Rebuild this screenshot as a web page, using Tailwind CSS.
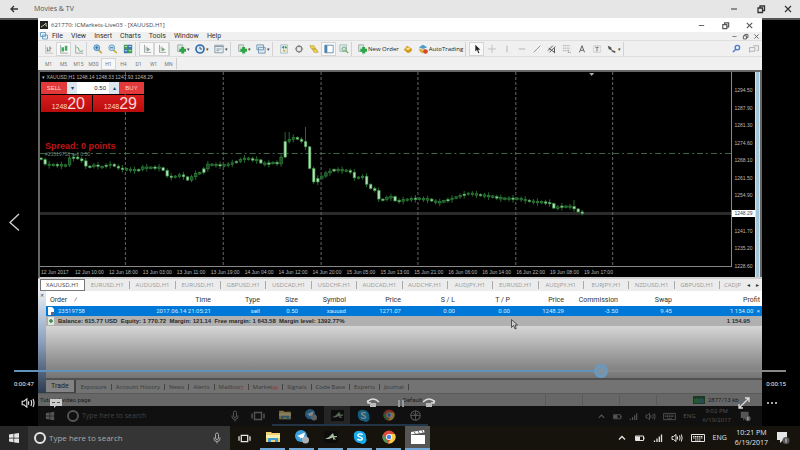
<!DOCTYPE html>
<html lang="en">

<head>
	<title>Movies &amp; TV</title>
	<meta charset="UTF-8">
	<meta name="viewport" content="width=device-width, initial-scale=1.0">
	<script src="https://cdn.jsdelivr.net/npm/@tailwindcss/browser@4"></script>
</head>

<body class="flex h-screen flex-col overflow-hidden bg-black font-['Roboto',sans-serif] text-[7px] leading-[10px] text-[#444]">

	<!-- shared icons -->
	<svg class="hidden">
		<symbol id="min" viewBox="0 0 10 10"><path d="M2 5h6" stroke="currentColor" /></symbol>
		<symbol id="restore" viewBox="0 0 10 10"><path d="M2 4h4.500v4.500H2zM4 4V2h4.500v4.500H6.500" fill="none" stroke="currentColor" stroke-width="1.300" /></symbol>
		<symbol id="close" viewBox="0 0 10 10"><path d="M2 2l6 6M8 2l-6 6" stroke="currentColor" stroke-width="1.200" /></symbol>
		<symbol id="win" viewBox="0 0 12 12"><path d="M1 2.500l4.500-.700v3.900H1zM6.200 1.700L11 1v4.700H6.200zM1 6.400h4.500v3.900L1 9.600zM6.200 6.400H11v4.700l-4.800-.700z" fill="currentColor" /></symbol>
		<symbol id="mic" viewBox="0 0 12 12"><path d="M4.500 2.500a1.500 1.500 0 0 1 3 0v3.500a1.500 1.500 0 0 1-3 0zM3 5.500v1a3 3 0 0 0 6 0v-1M6 9.500v2" fill="none" stroke="currentColor" /></symbol>
		<symbol id="ring" viewBox="0 0 14 14"><circle cx="7" cy="7" r="5" fill="none" stroke="currentColor" stroke-width="2" /></symbol>
		<symbol id="taskview" viewBox="0 0 14 12"><path d="M3.500 2.500h7v7h-7zM1 3.500v5M13 3.500v5" fill="none" stroke="currentColor" stroke-width="1.400" /></symbol>
		<symbol id="folder" viewBox="0 0 14 12"><path d="M0 1h5l1 1h8v9H0z" fill="#f0d070" /><path d="M0 4h14v3H0z" fill="#fdf0b0" /><path d="M2 7h10v4H9V9H5v2H2z" fill="#3fa0d0" /></symbol>
		<symbol id="telegram" viewBox="0 0 14 14"><circle cx="6" cy="6" r="6" fill="#3a9fdc" /><path d="M2 6l8-3.500L8.500 9 6 7.500 5 9 4.500 6.800z" fill="#fff" /><circle cx="10.500" cy="10" r="3.500" fill="#a9b2b8" /></symbol>
		<symbol id="trader" viewBox="0 0 14 14"><path d="M0 1h14v12H0z" fill="#0c0c0c" /><path d="M1 9l4-2 4-4 1 3h3v1l-3 .5 2 2H9V7.500L5 9z" fill="#a5bd98" /></symbol>
		<symbol id="skype" viewBox="0 0 14 14"><path d="M4 1a6 6 0 0 1 3 0 6 6 0 0 1 6 7 4 4 0 0 1-6 5 6 6 0 0 1-6-7 4 4 0 0 1 3-5z" fill="#18a9e8" /><path d="M9.500 4.800C8.500 3.500 5 3.500 4.800 5.200 4.700 7 9.500 6.600 9.400 8.700 9.200 10.500 5.500 10.500 4.500 9" fill="none" stroke="#fff" stroke-width="1.400" /></symbol>
		<symbol id="chrome" viewBox="0 0 14 14"><circle cx="7" cy="7" r="6.500" fill="#e04a3a" /><path d="M1.200 4L6 13.400A6.500 6.500 0 0 1 1.200 4z" fill="#3ba557" /><path d="M7 4h5.800A6.500 6.500 0 0 1 6 13.400L9.500 8z" fill="#f7ce46" /><circle cx="7" cy="7" r="3" fill="#fff" /><circle cx="7" cy="7" r="2.200" fill="#4285e8" /></symbol>
		<symbol id="ball" viewBox="0 0 14 14"><circle cx="7" cy="7" r="5" fill="none" stroke="#999" stroke-width="1.300" /><path d="M7 2v10M2 7h10M4 4l3 3 3-3" fill="none" stroke="#999" /></symbol>
		<symbol id="clapper" viewBox="0 0 14 14"><path d="M0 5h14v9H0zM0 2l13-2 .5 2.500L0 4.500z" fill="#fff" /><path d="M3 1.500l1.500 2.500M7 .9l1.500 2.500M11 .3l1 2.500" stroke="#666" /></symbol>
		<symbol id="up" viewBox="0 0 10 10"><path d="M2 6.500l3-3 3 3" fill="none" stroke="currentColor" stroke-width="1.300" /></symbol>
		<symbol id="battery" viewBox="0 0 10 10"><path d="M.5 3h8v4.500h-8zM9 4.300v2" fill="none" stroke="currentColor" /><path d="M1 3.500h4v3.500H1z" fill="currentColor" /></symbol>
		<symbol id="wifi" viewBox="0 0 10 10"><path d="M1.500 9V7.500M4 9V5.500M6.300 9V3.500M8.500 9V1.500" stroke="currentColor" stroke-width="1.300" /></symbol>
		<symbol id="sound" viewBox="0 0 12 10"><path d="M1 3.500h1.500L5 1.500v7L2.500 6.500H1zM6.500 3.500v3M8.500 2.500q1.200 2.500 0 5M10.300 1.500q1.700 3.500 0 7" fill="none" stroke="currentColor" /></symbol>
		<symbol id="kbd" viewBox="0 0 14 10"><path d="M.5 1.500h13v7H.5z" fill="none" stroke="currentColor" /><path d="M2 3.500h10M2 5h10M4 7h6" fill="none" stroke="currentColor" stroke-dasharray="1.500 .5" /></symbol>
		<symbol id="note" viewBox="0 0 14 14"><path d="M1 1h10v8H7l-3 3V9H1z" fill="currentColor" /><circle cx="10" cy="9.500" r="3.500" fill="#555" /><path d="M10 7.500v4" stroke="#ddd" /></symbol>

		<symbol id="bars" viewBox="0 0 12 12"><path d="M2 1v10h9" fill="none" stroke="#bbb" /><path d="M4 4v5M4 8h2M7 3v6M7 5h2" stroke="#6a7a6a" /></symbol>
		<symbol id="candles" viewBox="0 0 12 12"><path d="M2 1v10h9" fill="none" stroke="#999" /><path d="M3 4h3v5H3zM7 2h3v6H7z" fill="#3dae5c" /></symbol>
		<symbol id="linechart" viewBox="0 0 12 12"><path d="M2 1v10h9" fill="none" stroke="#999" /><path d="M3 4q3 0 3 3t5 1" fill="none" stroke="#5b9b6b" /></symbol>
		<symbol id="zoomin" viewBox="0 0 12 12"><path d="M6.500 7l4 4" stroke="#c7a640" stroke-width="2" /><circle cx="4.500" cy="4.500" r="3.500" fill="#a8d1ee" stroke="#3c80b8" /><path d="M2.500 4.500h4M4.500 2.500v4" stroke="#1d5c98" /></symbol>
		<symbol id="zoomout" viewBox="0 0 12 12"><path d="M6.500 7l4 4" stroke="#c7b640" stroke-width="2" /><circle cx="4.500" cy="4.500" r="3.500" fill="#c0e0ee" stroke="#5a98b8" /><path d="M2.500 4.500h4" stroke="#1d5c98" /></symbol>
		<symbol id="tile" viewBox="0 0 12 12"><path d="M1 1h5v5H1zM6 6h5v5H6z" fill="#3f9b56" /><path d="M6 1h5v5H6zM1 6h5v5H1z" fill="#3a77b5" /><path d="M2 3h3M7 3h3M2 8h3M7 8h3" stroke="#d8ebd8" /></symbol>
		<symbol id="scroll" viewBox="0 0 12 12"><path d="M3 1v9h8M5 3v5" fill="none" stroke="#999" /><path d="M6 4l4 2.500L6 9z" fill="#7aa98a" /></symbol>
		<symbol id="plus" viewBox="0 0 12 12"><path d="M2 1h6v8H2z" fill="#d8e4d8" stroke="#9aa" /><path d="M4 7.500h8M8 3.500v8" stroke="#2ba548" stroke-width="3.500" /></symbol>
		<symbol id="clock" viewBox="0 0 12 12"><circle cx="6" cy="6" r="4.800" fill="#dcebf7" stroke="#2e6da8" stroke-width="2" /><path d="M6 3v3h2.500" fill="none" stroke="#245" /></symbol>
		<symbol id="template" viewBox="0 0 12 12"><path d="M1 1.500h10v9H1z" fill="#e6eef2" stroke="#7d929c" /><path d="M1 3h10M3 6h6M3 8h3" stroke="#7d929c" /></symbol>
		<symbol id="windows" viewBox="0 0 12 12"><path d="M1 1h8v6H1zM3 4h8v7H3z" fill="#dcebf3" stroke="#6b8fac" /></symbol>
		<symbol id="market" viewBox="0 0 12 12"><path d="M2 1h8v10H2z" fill="#e9f2e6" stroke="#a3b8c2" /><path d="M3 4l3-2v4z" fill="#3a84c0" /><path d="M5 6l4 3H5z" fill="#d6a52c" /><path d="M7 3l2 2" stroke="#3a9b50" stroke-width="2" /></symbol>
		<symbol id="target" viewBox="0 0 12 12"><circle cx="6" cy="6" r="3.500" fill="#eee" stroke="#777" stroke-width="1.300" /><path d="M6 1v3M6 8v3M1 6h3M8 6h3" stroke="#888" /></symbol>
		<symbol id="tags" viewBox="0 0 12 12"><path d="M1 2h5l2 4H3zM4 6h5l2 4H6z" fill="#f0cf4c" stroke="#b8962c" stroke-width=".7" /></symbol>
		<symbol id="panel" viewBox="0 0 12 12"><path d="M1 1.500h10v9H1z" fill="#fff" stroke="#5b88aa" /><path d="M1 1.500h3v9H1z" fill="#4b83b0" /></symbol>
		<symbol id="tester" viewBox="0 0 12 12"><path d="M1 1h8v8H1z" fill="#e4ece8" stroke="#9bb" /><circle cx="6" cy="6" r="2.500" fill="#cfe6d4" stroke="#6a9b7a" /><path d="M8 8l3 3" stroke="#69a84f" stroke-width="1.500" /></symbol>
		<symbol id="gold" viewBox="0 0 12 12"><path d="M1 7l4-5 6 4-1 3-4 2z" fill="#cf9a22" /><path d="M3 6l3-2 3 1.500-3 2z" fill="#f9e38a" /></symbol>
		<symbol id="auto" viewBox="0 0 12 12"><path d="M1 4l5-3 5 3-5 2z" fill="#4b9bc8" /><path d="M1 5l5 2 3-1v3l-4 2-3-2z" fill="#dfae40" /><circle cx="9" cy="9" r="2.800" fill="#d4452c" /></symbol>
		<symbol id="arrow" viewBox="0 0 12 12"><path d="M4 1v8l2-2 1.500 4 1.300-.6L7.300 7H10z" fill="#222" /></symbol>
		<symbol id="cross" viewBox="0 0 12 12"><path d="M6 1v10M1 6h10" stroke="#bbb" /></symbol>
		<symbol id="vline" viewBox="0 0 12 12"><path d="M6 2v8" stroke="#aaa" /></symbol>
		<symbol id="hline" viewBox="0 0 12 12"><path d="M2 6h8" stroke="#aaa" /></symbol>
		<symbol id="trend" viewBox="0 0 12 12"><path d="M2 10l8-8" stroke="#888" /></symbol>
		<symbol id="channel" viewBox="0 0 12 12"><path d="M1 8l6-6M3 10l7-7M2 5l7 5M9 5v6" stroke="#555" stroke-width="1.200" /></symbol>
		<symbol id="fibo" viewBox="0 0 12 12"><path d="M1 2h9M1 5h9M1 8h7M8 7v4M7 10h4" stroke="#999" stroke-dasharray="1.500 .7" /></symbol>
		<symbol id="textA" viewBox="0 0 12 12"><path d="M3 10l3-8 3 8M4 7.500h4" fill="none" stroke="#666" stroke-width="1.200" /></symbol>
		<symbol id="label" viewBox="0 0 12 12"><path d="M2 2h8v8H2z" fill="none" stroke="#aaa" stroke-dasharray="1 1" /><path d="M4 4h4M6 4v5" stroke="#666" /></symbol>
		<symbol id="shapes" viewBox="0 0 12 12"><path d="M1 2l4 2 1 4-4-2z" fill="#555" /><path d="M6 8l4 2" stroke="#555" stroke-width="2" /></symbol>
	</svg>

	<header class="flex h-[18px] shrink-0 items-center bg-[#e6e6e6] pr-[7px] text-[#555]">
		<button aria-label="Back" class="ml-2 mr-[14px] h-[10px] w-[12px]">
			<svg viewBox="0 0 12 10" class="h-full w-full"><path d="M10 5H3M6 2L3 5l3 3" fill="none" stroke="#333" stroke-width="1.300" /></svg>
		</button>
		<h1 class="flex-1 font-['Open_Sans',sans-serif]">Movies &amp; TV</h1>
		<div class="flex gap-[17px] text-[#333]">
			<button aria-label="Minimize"><svg class="size-[10px]"><use href="#min" /></svg></button>
			<button aria-label="Restore"><svg class="size-[10px]"><use href="#restore" /></svg></button>
			<button aria-label="Close"><svg class="size-[10px]"><use href="#close" /></svg></button>
		</div>
	</header>

	<main class="relative flex min-h-0 flex-1">
		<div class="w-[38px] shrink-0 border-t-2 border-[#555]"></div>

		<!-- the video frame -->
		<div class="flex min-w-0 flex-1 flex-col bg-[#f0f0f0]">
			<div class="flex h-[14px] items-center bg-white pl-[2px] pr-[8px] text-[6px]">
				<svg viewBox="0 0 8 8" class="mr-[3px] size-[8px]"><path d="M0 0h8v8H0z" fill="#222" /><path d="M1 6l3-2 2-2v3h1" fill="none" stroke="#b5c5a8" /></svg>
				<span class="flex-1 font-['Open_Sans',sans-serif]">621770: ICMarkets-Live03 - [XAUUSD,H1]</span>
				<div class="flex gap-[15px] text-[#555]">
					<svg class="size-[9px]"><use href="#min" /></svg>
					<svg class="size-[9px]"><use href="#restore" /></svg>
					<svg class="size-[9px]"><use href="#close" /></svg>
				</div>
			</div>
			<nav class="flex h-[8px] items-center gap-[8px] pl-[2px] pr-[2px] text-[#333]">
				<svg viewBox="0 0 8 8" class="-mr-[4px] size-[8px]"><path d="M.5 .5h5v4h-5zM2.500 3h5v4h-5z" fill="#e8f3fb" stroke="#6fa3c8" /></svg>
				<a href="#">File</a><a href="#">View</a><a href="#">Insert</a><a href="#">Charts</a><a href="#">Tools</a><a href="#">Window</a><a href="#">Help</a>
				<div class="ml-auto flex gap-[4px] text-[#555]">
					<svg class="size-[7px]"><use href="#min" /></svg>
					<svg class="size-[7px]"><use href="#restore" /></svg>
					<svg class="size-[7px]"><use href="#close" /></svg>
				</div>
			</nav>
			<div class="flex h-[17px] items-center border-y border-[#dedede] pl-[3px] pr-[2px]" id="toolbar"></div>
			<div class="flex h-[13px] items-center pl-[3px] text-[5px] text-[#777]" id="periods"></div>

			<!-- chart window -->
			<div class="flex min-h-0 flex-1 border-b-2 border-l-2 border-t-2 border-[#666] border-b-[#d0d0d0] bg-black font-['Liberation_Sans',sans-serif] text-[#bbb]">
				<div class="relative flex min-w-0 flex-1 flex-col">
					<svg class="min-h-0 w-full flex-1 border-b border-r border-[#888]" viewBox="40 72 692 194" preserveAspectRatio="none" id="chart"></svg>
					<div class="flex h-[10px] items-center pr-[115px] text-[5px]" id="dates"></div>
					<p class="absolute left-[2px] top-0 whitespace-nowrap text-[5px]">&#9662; XAUUSD,H1 1248.14 1248.33 1247.93 1248.29</p>
					<p class="absolute left-[5px] top-[79px] whitespace-nowrap text-[5px] leading-[6px] text-[#688878]">#23519758 sell 0.50</p>
					<p class="absolute left-[5px] top-[70px] whitespace-nowrap text-[9px] leading-[9px] font-bold text-[#c01414]">Spread: 0 points</p>
					<div class="absolute left-[1px] top-[10px] grid w-[103px] grid-cols-2 gap-px text-[#ffd5d5]">
						<div class="col-span-2 flex h-[12px] text-[6px]">
							<button class="w-[26px] bg-[#e23a3a]">SELL</button>
							<button aria-label="Less volume" class="w-[10px] bg-[#dce6ee] text-[#246]">&#9662;</button>
							<input aria-label="Volume" value="0.50" class="w-0 flex-1 bg-white pr-[3px] text-right text-[#222]">
							<button aria-label="More volume" class="w-[10px] bg-[#dce6ee] text-[#246]">&#9652;</button>
							<button class="w-[25px] bg-[#e23a3a]">BUY</button>
						</div>
						<button class="flex h-[17px] items-end justify-end bg-linear-to-b from-[#d81c1c] to-[#b80c0c] pr-[7px] text-[7px]">1248<span class="text-[16px] leading-[17px]">20</span></button>
						<button class="flex h-[17px] items-end justify-end bg-linear-to-b from-[#d81c1c] to-[#b80c0c] pr-[7px] text-[7px]">1248<span class="text-[16px] leading-[17px]">29</span></button>
					</div>
				</div>
				<div class="flex w-[23px] flex-col justify-around pb-[2px] pt-[10px] text-[5px] leading-[7px]" id="prices"></div>
				<div class="w-[5px] border-x border-[#d5e5ee] bg-[#a2c6d8]"></div>
				<div class="w-[2px] bg-[#666]"></div>
			</div>

			<nav class="flex h-[12px] items-center overflow-hidden bg-[#ececec] pl-[2px] font-['Open_Sans',sans-serif] text-[6px] text-[#999]" id="charts"></nav>

			<!-- terminal -->
			<section class="flex h-[102px] shrink-0">
				<div class="w-[8px] bg-linear-to-b from-[#e8eef5] via-[#8ba0bd] to-[#2e3c50] text-center text-[5px] leading-[8px]">&#10005;</div>
				<div class="flex min-w-0 flex-1 flex-col bg-white">
					<table class="mt-[2px] w-full table-fixed text-right whitespace-nowrap [&_td]:p-0 [&_td]:pr-[2px] [&_th]:p-0 [&_th]:pr-[2px]">
						<thead class="bg-white text-[#333]">
							<tr class="h-[13px] [&_th]:font-normal">
								<th class="w-[60px] text-left"><span class="pl-[4px]">Order&nbsp; &nbsp; &#8260;</span></th>
								<th class="w-[107px]">Time</th>
								<th class="w-[49px]">Type</th>
								<th class="w-[38px]">Size</th>
								<th class="w-[48px]">Symbol</th>
								<th class="w-[55px]">Price</th>
								<th class="w-[54px]">S / L</th>
								<th class="w-[55px]">T / P</th>
								<th class="w-[54px]">Price</th>
								<th class="w-[54px]">Commission</th>
								<th class="w-[54px]">Swap</th>
								<th>Profit</th>
							</tr>
						</thead>
						<tbody>
							<tr class="h-[10px] bg-[#0078d7] text-[6px] text-[#d5ebff]">
								<td class="text-left"><span class="flex items-center gap-[4px] pl-[2px]"><svg viewBox="0 0 6 8" class="h-[8px] w-[6px]"><path d="M0 0h4l2 2v6H0z" fill="#fff" /><path d="M3 5h3v3H3z" fill="#667" /></svg>23519758</span></td>
								<td>2017.06.14 21:05:21</td>
								<td>sell</td>
								<td>0.50</td>
								<td>xauusd</td>
								<td>1271.07</td>
								<td>0.00</td>
								<td>0.00</td>
								<td>1248.29</td>
								<td>-3.50</td>
								<td>9.45</td>
								<td>1 154.00 <button aria-label="Close order" class="ml-[2px]">&times;</button></td>
							</tr>
							<tr class="h-[10px] bg-[#b0b0b0] font-['Liberation_Sans',sans-serif] text-[6px] text-[#2a2a2a]">
								<td colspan="10" class="text-left"><span class="flex items-center gap-[4px] pl-[2px] font-bold"><svg viewBox="0 0 6 8" class="h-[8px] w-[6px]"><path d="M0 0h6v8H0z" fill="#dfe8dc" /><path d="M1 4h4M3 2v4" stroke="#3a8a48" stroke-width="1.500" /></svg>Balance: 615.77 USD&nbsp; Equity: 1 770.72&nbsp; Margin: 121.14&nbsp; Free margin: 1 643.58&nbsp; Margin level: 1392.77%</span></td>
								<td colspan="2"><span class="pr-[10px] font-bold">1 154.95</span></td>
							</tr>
						</tbody>
					</table>
					<div class="flex-1 bg-linear-to-b from-[#d6d6d6] to-[#747474]"></div>
					<nav class="flex h-[15px] items-center border-t-2 border-[#505050] bg-[#737373] text-[#3a3a3a]">
						<a href="#" class="flex h-full items-center border-b border-r-2 border-[#444] bg-[#838383] px-[5px] text-[#222]">Trade</a>
						<div class="flex items-center gap-[4px] pl-[5px] font-['Open_Sans',sans-serif] text-[6px]" id="tabs"></div>
					</nav>
				</div>
			</section>
			<div class="flex h-[13px] shrink-0 items-center border-t border-[#5a5a5a] bg-[#676767] pl-[2px] text-[6px] text-[#1c1c1c]">
				<span class="w-[363px]">Tutorial video page</span>
				<span class="w-[142px]">Default</span>
				<span class="w-[37px] border-l border-[#5a5a5a]">&nbsp;</span>
				<span class="w-[37px] border-l border-[#5a5a5a]">&nbsp;</span>
				<span class="w-[37px] border-l border-[#5a5a5a]">&nbsp;</span>
				<span class="flex flex-1 items-center gap-[3px] border-l border-[#5a5a5a] pl-[36px]"><svg viewBox="0 0 12 8" class="h-[8px] w-[12px]"><path d="M0 0h12v8H0z" fill="#1d3a24" /><path d="M2 7V3M4 7V2M6 7V3" stroke="#2e7440" /><path d="M8 7V2M10 7V3" stroke="#365a86" /></svg>2877/13 kb</span>
			</div>
			<div class="flex h-[20px] shrink-0 items-center bg-[#101010] font-['Open_Sans',sans-serif] text-[#555]">
				<svg class="ml-[7px] size-[10px]"><use href="#win" /></svg>
				<svg class="ml-[11px] size-[14px]"><use href="#ring" /></svg>
				<span class="ml-[2px] w-[147px] text-[#444]">Type here to search</span>
				<svg class="size-[12px]"><use href="#mic" /></svg>
				<svg class="ml-[10px] h-[12px] w-[14px]"><use href="#taskview" /></svg>
				<div class="ml-[7px] flex h-full opacity-50">
					<span class="flex w-[26px] items-center justify-center border-b-2 border-[#345a80]"><svg class="h-[10px] w-[12px]"><use href="#folder" /></svg></span>
					<span class="flex w-[26px] items-center justify-center border-b-2 border-[#345a80]"><svg class="size-[12px]"><use href="#telegram" /></svg></span>
					<span class="flex w-[26px] items-center justify-center border-b-2 border-[#345a80] bg-[#3a3a3a]"><svg class="size-[13px]"><use href="#trader" /></svg></span>
					<span class="flex w-[26px] items-center justify-center border-b-2 border-[#345a80]"><svg class="size-[13px]"><use href="#skype" /></svg></span>
					<span class="flex w-[26px] items-center justify-center border-b-2 border-[#345a80]"><svg class="size-[12px]"><use href="#chrome" /></svg></span>
					<span class="flex w-[26px] items-center justify-center border-b-2 border-[#345a80]"><svg class="size-[13px]"><use href="#ball" /></svg></span>
				</div>
				<div class="ml-auto flex items-center gap-[7px] pr-[11px]">
					<svg class="size-[9px]"><use href="#up" /></svg>
					<svg class="size-[9px]"><use href="#battery" /></svg>
					<svg class="size-[9px]"><use href="#wifi" /></svg>
					<svg class="h-[9px] w-[11px]"><use href="#sound" /></svg>
					<svg class="h-[9px] w-[13px]"><use href="#kbd" /></svg>
					<span class="text-[6px]">ENG</span>
					<span class="text-center text-[6px] leading-[9px]">9:02 PM<br>6/19/2017</span>
					<svg class="ml-[2px] size-[11px]"><use href="#note" /></svg>
				</div>
			</div>
		</div>

		<div class="w-[38px] shrink-0 border-t-2 border-[#555]"></div>

		<!-- mouse pointer inside the video -->
		<svg viewBox="0 0 7 11" class="absolute left-[511px] top-[301px] h-[11px] w-[7px]"><path d="M.5 .5v8l2-2 1.500 3.500 1.300-.5L4 6h2.500z" fill="#ccc" stroke="#333" stroke-width=".8" /></svg>

		<!-- player controls -->
		<button aria-label="Previous" class="absolute left-[7px] top-[194px] h-[20px] w-[14px]">
			<svg viewBox="0 0 14 20" class="h-full w-full"><path d="M12 2L3 10.500l9 8" fill="none" stroke="#ccc" stroke-width="1.400" /></svg>
		</button>
		<div class="absolute inset-x-0 bottom-[16px] px-[14px] text-[#eee]">
			<input type="range" aria-label="Seek" min="0" max="1000" value="765" class="block h-[14px] w-full appearance-none bg-[linear-gradient(to_right,#6092bc_75%,#888_75%)] bg-[length:100%_2px] bg-center bg-no-repeat [&::-webkit-slider-thumb]:size-[14px] [&::-webkit-slider-thumb]:appearance-none [&::-webkit-slider-thumb]:rounded-full [&::-webkit-slider-thumb]:border-3 [&::-webkit-slider-thumb]:border-[#6a99c0] [&::-webkit-slider-thumb]:bg-[#7f92a2]">
			<div class="flex justify-between pt-px text-[6px]"><span>0:00:47</span><span>0:00:15</span></div>
			<div class="mt-[7px] flex h-[14px] items-center pl-[7px] text-[#ddd]">
				<button aria-label="Volume" class="w-[14px]"><svg class="h-[12px] w-[14px]"><use href="#sound" /></svg></button>
				<button aria-label="Subtitles" class="ml-[14px] w-[14px]"><svg viewBox="0 0 14 10" class="h-[10px] w-[14px]"><path d="M1 1h12v7H7l-2 2V8H1z" fill="#ccc" /><path d="M3 4.500h3M8 4.500h3" stroke="#555" /></svg></button>
				<div class="flex flex-1 justify-center gap-[16px]">
					<button aria-label="Skip back"><svg viewBox="0 0 14 12" class="h-[12px] w-[14px]"><path d="M1 5q6-6 12 0M2 3v3h3" fill="none" stroke="#ddd" stroke-width="1.500" /><path d="M4 6h6v4H4z" fill="#bbb" /></svg></button>
					<button aria-label="Pause"><svg viewBox="0 0 10 12" class="h-[12px] w-[10px]"><path d="M2 3h2v7H2zM6 3h2v7H6z" fill="#999" /></svg></button>
					<button aria-label="Skip forward"><svg viewBox="0 0 14 12" class="h-[12px] w-[14px]"><path d="M1 5q6-6 12 0M12 3v3H9" fill="none" stroke="#ddd" stroke-width="1.500" /><path d="M4 6h6v4H4z" fill="#bbb" /></svg></button>
				</div>
				<button aria-label="Full screen" class="mr-[16px]"><svg viewBox="0 0 12 12" class="size-[12px]"><path d="M7 1h4v4M11 1L1 11M1 7v4h4" fill="none" stroke="#ddd" stroke-width="1.300" /></svg></button>
				<button aria-label="More" class="mr-[8px]"><svg viewBox="0 0 12 4" class="h-[4px] w-[12px]"><path d="M1 2h2M5 2h2M9 2h2" stroke="#ddd" stroke-width="1.300" /></svg></button>
			</div>
		</div>
	</main>

	<footer class="flex h-[24px] shrink-0 items-center bg-[#15130b] font-['Open_Sans',sans-serif] text-[#e5e5e5]">
		<button aria-label="Start" class="flex h-full w-[28px] items-center justify-center bg-[#262626]"><svg class="size-[12px]"><use href="#win" /></svg></button>
		<label class="flex h-full w-[202px] items-center bg-[#353535] pl-[5px] pr-[7px]">
			<svg class="size-[14px] shrink-0"><use href="#ring" /></svg>
			<input aria-label="Search" placeholder="Type here to search" class="ml-[2px] w-0 flex-1 text-[8px] placeholder:text-[#aaa]">
			<svg class="size-[12px] text-[#aaa]"><use href="#mic" /></svg>
		</label>
		<button aria-label="Task view" class="flex h-full w-[28px] items-center justify-center"><svg class="h-[11px] w-[13px]"><use href="#taskview" /></svg></button>
		<div class="flex h-full gap-[4px] pl-[2px] [&>button]:flex [&>button]:w-[25px] [&>button]:items-center [&>button]:justify-center [&>button]:border-b-2 [&>button]:border-[#6fa8d8]">
			<button aria-label="File Explorer"><svg class="h-[12px] w-[14px]"><use href="#folder" /></svg></button>
			<button aria-label="Telegram"><svg class="size-[14px]"><use href="#telegram" /></svg></button>
			<button aria-label="MetaTrader"><svg class="size-[14px]"><use href="#trader" /></svg></button>
			<button aria-label="Skype"><svg class="size-[14px]"><use href="#skype" /></svg></button>
			<button aria-label="Chrome"><svg class="size-[14px]"><use href="#chrome" /></svg></button>
			<button aria-label="Movies and TV" class="bg-[#555]"><svg class="size-[14px]"><use href="#clapper" /></svg></button>
		</div>
		<div class="ml-auto flex items-center gap-[8px] pr-[10px]">
			<svg class="size-[10px]"><use href="#up" /></svg>
			<svg class="size-[10px]"><use href="#battery" /></svg>
			<svg class="size-[10px]"><use href="#wifi" /></svg>
			<svg class="h-[10px] w-[12px]"><use href="#sound" /></svg>
			<svg class="h-[10px] w-[14px]"><use href="#kbd" /></svg>
			<span>ENG</span>
			<time class="text-center">10:21 PM<br>6/19/2017</time>
			<button aria-label="Notifications"><svg class="size-[14px]"><use href="#note" /></svg></button>
		</div>
	</footer>

	<script>
		// toolbar: groups of [icon, kind or text]
		const groups = [
			[["bars"], ["candles", "on"], ["linechart"]],
			[["zoomin"], ["zoomout"], ["tile"]],
			[["scroll", "on"], ["scroll", "on"]],
			[["plus", "menu"], ["clock", "menu"], ["template", "menu"]],
			[["plus", "menu"], ["windows", "menu"]],
			[["market"], ["target"], ["tags"], ["panel", "on"], ["tester"]],
			[["plus", "New Order"], ["gold"], ["auto", "AutoTrading"]],
			[["arrow", "on"], ["cross"], ["vline"], ["hline"], ["trend"], ["channel"], ["fibo"], ["textA"], ["label"], ["shapes", "menu"]],
		];
		let bar = "";
		for (let group of groups) {
			bar += `<div class="mr-[3px] flex h-[14px] shrink-0 border-r border-[#d2d2d2]">`;
			for (let [icon, kind] of group) {
				const svg = `<svg class="size-[10px] shrink-0"><use href="#${icon}" /></svg>`;
				if (kind == "menu") {
					bar += `<button aria-label="${icon}" class="flex w-[19px] items-center justify-center gap-[1px] text-[5px]">${svg}&#9662;</button>`;
				} else if (kind == "on") {
					bar += `<button aria-label="${icon}" class="flex w-[15px] items-center justify-center border border-[#d5d5d5] bg-[#f8f8f8]">${svg}</button>`;
				} else if (kind) {
					bar += `<button class="flex items-center gap-px pl-[2px] pr-[2px] font-['Open_Sans',sans-serif] text-[6px] whitespace-nowrap text-[#222]">${svg}${kind}</button>`;
				} else {
					bar += `<button aria-label="${icon}" class="flex w-[15px] items-center justify-center">${svg}</button>`;
				}
			}
			bar += `</div>`;
		}
		bar += `<div class="ml-auto flex gap-[7px]">
			<svg viewBox="0 0 10 10" class="size-[9px]"><circle cx="6" cy="4" r="2.500" fill="none" stroke="#4a78c8" stroke-width="1.500" /><path d="M4 6L1 9" stroke="#4a78c8" stroke-width="1.500" /></svg>
			<svg viewBox="0 0 12 10" class="h-[9px] w-[12px]"><path d="M1 4h6v4H3L1 9zM5 2h6v5H9" fill="none" stroke="#aaa" /></svg>
		</div>`;
		document.getElementById("toolbar").innerHTML = bar;

		let periods = "";
		for (let p of ["M1", "M5", "M15", "M30", "H1", "H4", "D1", "W1", "MN"]) {
			periods += p == "H1"
				? `<button class="h-[12px] w-[15px] border border-[#d5d5d5] bg-[#f8f8f8]">${p}</button>`
				: `<button class="w-[15px]">${p}</button>`;
		}
		document.getElementById("periods").innerHTML = periods + `<i class="h-[11px] border-l border-[#ccc]"></i>`;

		// terminal tabs with their unread counts
		const tabs = [["Exposure"], ["Account History"], ["News"], ["Alerts"], ["Mailbox", 7], ["Market", 66], ["Signals"], ["Code Base"], ["Experts"], ["Journal"]];
		document.getElementById("tabs").innerHTML = tabs.map(([name, count]) =>
			`<a href="#">${name}${count ? `<sub class="text-[5px] text-[#a22]">${count}</sub>` : ""}</a><span class="h-[6px] border-l border-[#444]"></span>`).join("");

		// axis labels
		const days = ["12 Jun 2017", "12 Jun 10:00", "12 Jun 18:00", "13 Jun 03:00", "13 Jun 11:00", "13 Jun 19:00", "14 Jun 04:00", "14 Jun 12:00", "14 Jun 20:00", "15 Jun 05:00", "15 Jun 13:00", "15 Jun 21:00", "16 Jun 06:00", "16 Jun 14:00", "16 Jun 22:00", "19 Jun 08:00", "19 Jun 17:00"];
		document.getElementById("dates").innerHTML = days.map(d => `<span class="min-w-0 flex-1 pl-[1px] whitespace-nowrap">${d}</span>`).join("");

		const prices = ["1294.50", "1287.90", "1281.30", "1274.60", "1268.10", "1261.50", "1254.90", "1248.29", "1241.70", "1235.20", "1228.60"];
		document.getElementById("prices").innerHTML = prices.map(p => p == "1248.29"
			? `<span class="bg-white text-center text-[#444]">${p}</span>`
			: `<span class="text-center">${p}</span>`).join("");

		const symbols = ["EURUSD", "AUDUSD", "EURUSD", "GBPUSD", "USDCAD", "USDCHF", "AUDCAD", "AUDCHF", "AUDJPY", "EURUSD", "AUDJPY", "EURJPY", "NZDUSD", "GBPUSD"];
		document.getElementById("charts").innerHTML =
			`<a href="#" class="h-full w-[45px] border border-[#777] bg-white text-center text-[#444]">XAUUSD,H1</a>` +
			symbols.map(s => `<a href="#" class="min-w-0 flex-1 border-r border-[#aaa] text-center leading-[8px]">${s},H1</a>`).join("") +
			`<a href="#" class="w-[24px] overflow-hidden pl-[4px]">CADJP</a><button aria-label="Scroll left" class="w-[9px] text-[#333]">&#9666;</button><button aria-label="Scroll right" class="w-[9px] text-[#333]">&#9656;</button>`;

		// closing levels along the time axis, hours in between are interpolated
		const points = [[40, 158], [44, 164], [66, 165], [70, 157], [74, 157], [78, 159], [84, 162], [88, 171], [91, 164], [100, 167], [110, 164], [118, 168], [125, 169], [138, 170], [142, 167], [158, 167], [163, 170], [168, 177], [176, 176], [182, 174], [186, 181], [190, 179], [194, 174], [202, 172], [207, 164], [225, 165], [232, 163], [240, 160], [244, 158], [258, 160], [262, 164], [275, 162], [280, 166], [284, 141], [287, 142], [291, 138], [295, 137], [300, 141], [305, 142], [309, 164], [313, 183], [317, 179], [321, 177], [326, 173], [335, 169], [350, 171], [354, 178], [364, 176], [368, 187], [376, 191], [380, 201], [384, 199], [391, 196], [395, 201], [415, 198], [428, 199], [432, 201], [440, 202], [450, 199], [462, 195], [468, 193], [475, 194], [490, 196], [500, 198], [516, 198], [530, 201], [545, 202], [552, 204], [555, 209], [560, 206], [570, 206], [575, 209], [579, 212], [584, 214]];
		function level(x) {
			let i = 1;
			while (i < points.length - 1 && points[i][0] < x) i++;
			const [x0, y0] = points[i - 1], [x1, y1] = points[i];
			return y0 + (y1 - y0) * (x - x0) / (x1 - x0);
		}

		let out = `<rect x="40" y="212" width="692" height="3" fill="#2b2b2b" />
			<path d="M40 153.500H732" stroke="#3d6647" stroke-dasharray="6 3 2 3" />
			<path d="M590 73h5l-2.500 3z" fill="#aaa" />`;
		for (let x of [125, 223, 321, 418, 516, 613]) {
			out += `<path d="M${x}.5 72V266" stroke="#666" stroke-dasharray="3 2" />`;
		}
		let open = 158, n = 0;
		for (let x = 41; x < 585; x += 4.075, n++) {
			const close = level(x);
			const top = Math.min(open, close), h = Math.max(1.5, Math.abs(close - open));
			let high = top - 1 - n % 3, low = top + h + 1 + n * 7 % 3;
			if (x > 304 && x < 309) high = 127;
			if (x > 285 && x < 290) high = 132;
			if (x > 573 && x < 577) high = 200;
			const down = close > open + 1 || n % 4 == 0;
			out += `<path d="M${x} ${high}V${low}" stroke="#226a2c" />
				<rect x="${x - 1.2}" y="${top}" width="2.6" height="${h}" fill="${down ? "#b4deb6" : "#174d1f"}" stroke="#348a40" stroke-width=".6" />`;
			open = close;
		}
		document.getElementById("chart").innerHTML = out;
	</script>
</body>

</html>
